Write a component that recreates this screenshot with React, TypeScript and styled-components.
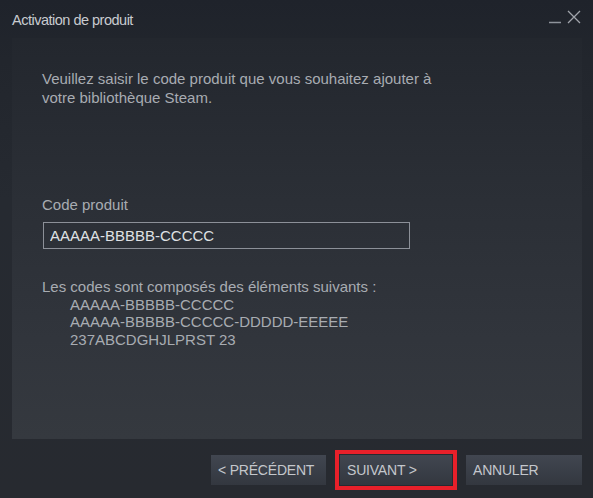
import styled, { createGlobalStyle } from 'styled-components';

const GlobalStyle = createGlobalStyle`
  html, body {
    margin: 0;
    padding: 0;
    background: #262a31;
  }
  * {
    box-sizing: border-box;
  }
`;

const Window = styled.div`
  width: 593px;
  height: 498px;
  display: flex;
  flex-direction: column;
  background: linear-gradient(to bottom, #1f232b 0px, #22262d 60px, #262a31 200px, #272a30 100%);
  font-family: 'Liberation Sans', Arial, sans-serif;
  overflow: hidden;
`;

const TitleBar = styled.div`
  height: 38px;
  display: flex;
  align-items: flex-start;
  justify-content: space-between;
  padding: 11px 12px 0 12px;
`;

const Title = styled.div`
  color: #c8cbd0;
  font-size: 14.5px;
  line-height: 18px;
  letter-spacing: -0.5px;
`;

const Controls = styled.div`
  display: flex;
  align-items: flex-start;
  gap: 6px;
  margin-top: -1px;
`;

const Panel = styled.div`
  margin: 0 11px 0 12px;
  height: 401px;
  padding: 31px 30px 0 30px;
  display: flex;
  flex-direction: column;
  background: linear-gradient(to bottom, #23272e 0%, #2a2e35 35%, #31353c 75%, #35393f 100%);
`;

const Intro = styled.p`
  margin: 0;
  width: 400px;
  color: #a8acb2;
  font-size: 15px;
  line-height: 19px;
`;

const FieldLabel = styled.div`
  margin-top: 88px;
  color: #a8acb2;
  font-size: 15px;
  line-height: 19px;
`;

const CodeInput = styled.input`
  margin-top: 8px;
  margin-left: 1px;
  width: 367px;
  height: 27px;
  padding: 0 6px;
  background: transparent;
  border: 1px solid #8c9098;
  color: #dfe1e4;
  font-family: 'Liberation Sans', Arial, sans-serif;
  font-size: 15px;
  outline: none;
`;

const Formats = styled.div`
  margin-top: 29px;
  color: #a8acb2;
  font-size: 15px;
  line-height: 17.7px;
`;

const FormatLine = styled.div<{ $indent?: boolean }>`
  padding-left: ${(p) => (p.$indent ? '28px' : '0')};
`;

const Footer = styled.div`
  display: flex;
  justify-content: flex-end;
  align-items: center;
  gap: 9px;
  padding: 11px 11px 0 0;
`;

const Highlight = styled.div`
  border: 4px solid #e8202a;
  padding: 1px;
`;

const Button = styled.button<{ $width: number }>`
  width: ${(p) => p.$width}px;
  height: 30px;
  padding: 0 0 0 7px;
  text-align: left;
  border: none;
  background: linear-gradient(to bottom, #414650 0%, #3a3f48 50%, #33373f 100%);
  color: #c4c7cc;
  font-family: 'Liberation Sans', Arial, sans-serif;
  font-size: 14px;
  letter-spacing: -0.2px;
`;

const formats = ['AAAAA-BBBBB-CCCCC', 'AAAAA-BBBBB-CCCCC-DDDDD-EEEEE', '237ABCDGHJLPRST 23'];

const App = (): JSX.Element => {
  return (
    <>
      <GlobalStyle />
      <Window>
        <TitleBar>
          <Title>Activation de produit</Title>
          <Controls>
            <svg width="12" height="14" viewBox="0 0 12 14">
              <path d="M0 12.5h12" stroke="#8e939b" strokeWidth="1.5" />
            </svg>
            <svg width="14" height="14" viewBox="0 0 14 14">
              <path d="M1 1l12 12M13 1L1 13" stroke="#a0a4ab" strokeWidth="1.3" />
            </svg>
          </Controls>
        </TitleBar>
        <Panel>
          <Intro>Veuillez saisir le code produit que vous souhaitez ajouter à votre bibliothèque Steam.</Intro>
          <FieldLabel>Code produit</FieldLabel>
          <CodeInput defaultValue="AAAAA-BBBBB-CCCCC" />
          <Formats>
            <FormatLine>Les codes sont composés des éléments suivants :</FormatLine>
            {formats.map((f) => (
              <FormatLine key={f} $indent>
                {f}
              </FormatLine>
            ))}
          </Formats>
        </Panel>
        <Footer>
          <Button $width={115}>&lt; PRÉCÉDENT</Button>
          <Highlight>
            <Button $width={112}>SUIVANT &gt;</Button>
          </Highlight>
          <Button $width={116}>ANNULER</Button>
        </Footer>
      </Window>
    </>
  );
};

export default App;
